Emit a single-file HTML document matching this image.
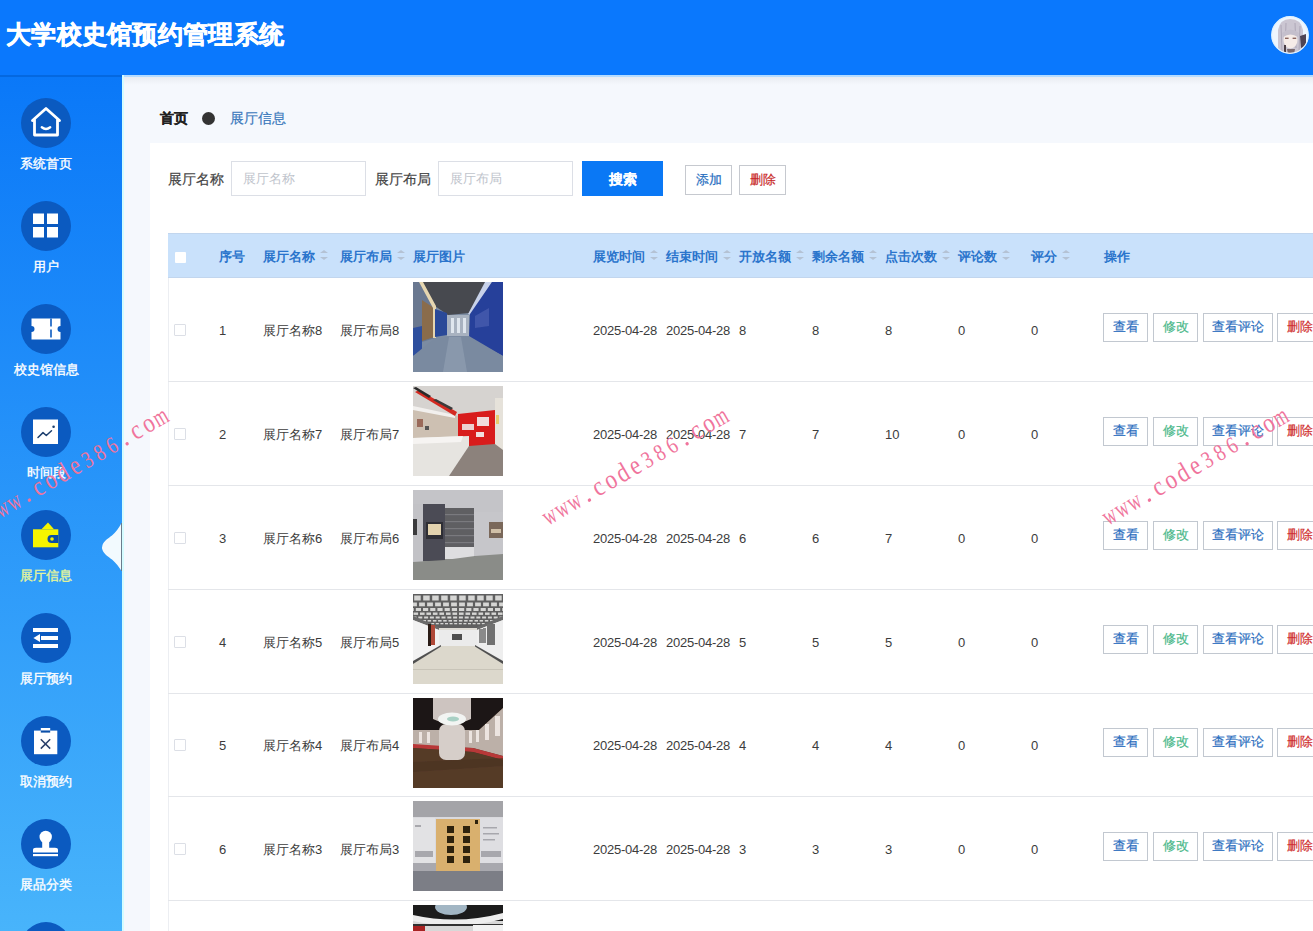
<!DOCTYPE html><html><head><meta charset="utf-8"><style>
*{box-sizing:border-box;margin:0;padding:0}
html,body{width:1313px;height:931px;overflow:hidden;background:#f5f8fd;font-family:"Liberation Sans",sans-serif;position:relative}
.a{position:absolute}
#hdr{left:0;top:0;width:1313px;height:75px;background:#0a78fd}
#title{left:6px;top:19px;color:#fff;font-size:25.3px;letter-spacing:0.3px;line-height:30px;font-weight:bold;white-space:nowrap;-webkit-text-stroke:0.6px #fff}
#side{left:0;top:75px;width:122px;height:856px;background:linear-gradient(#0a78f8,#48b4fb)}
.circ{position:absolute;left:21px;width:50px;height:50px;border-radius:50%;background:#0b5ac0}
.circ svg{position:absolute;left:0;top:0}
.lbl{position:absolute;left:0;width:92px;text-align:center;color:#fff;font-size:13px;line-height:16px;white-space:nowrap;-webkit-text-stroke:0.35px currentColor}
#main{left:122px;top:75px;width:1191px;height:856px;background:#f5f8fd}
#card{left:150px;top:143px;width:1163px;height:788px;background:#fff}
.bc{font-size:14px;line-height:18px;white-space:nowrap}
.slab{font-size:13.6px;color:#444;line-height:16px;white-space:nowrap;-webkit-text-stroke:0.2px currentColor}
.inp{height:35px;border:1px solid #dcdfe6;background:#fff;font-size:13px;color:#c0c4cc;line-height:33px;padding-left:11px;white-space:nowrap}
.btn{border:1px solid #c6c9cf;background:#fff;font-size:13px;text-align:center;white-space:nowrap;-webkit-text-stroke:0.2px currentColor}
#thead{left:168px;top:233px;width:1145px;height:45px;background:#c9e1fb}
.th{font-size:13px;font-weight:bold;color:#2a74cc;line-height:16px;white-space:nowrap;top:249px}
.sort{width:8px;height:10px;top:250px}
.sort:before,.sort:after{content:"";position:absolute;left:0;border-left:4px solid transparent;border-right:4px solid transparent}
.sort:before{top:0;border-bottom:3px solid #b4c2d4}
.sort:after{bottom:0;border-top:3px solid #b4c2d4}
.td{font-size:13px;color:#3c3c3c;line-height:16px;white-space:nowrap}
.dt{letter-spacing:-0.25px}
.rb{left:168px;width:1145px;height:1px;background:#e4e6ea}
.cb{width:12px;height:12px;border:1px solid #dcdfe6;background:#fff;border-radius:1px}
.img{left:413px;width:90px;height:90px;overflow:hidden}
.ob{height:29px;line-height:25px;-webkit-text-stroke:0.2px currentColor;font-size:13px;text-align:center;border:1px solid #c2c8d0;background:#fff;white-space:nowrap}
.wm{font-family:"Liberation Serif",serif;font-size:24px;color:#ee6f98;white-space:nowrap;letter-spacing:2.6px;transform-origin:0 0;transform:rotate(-31deg);line-height:24px}
</style></head><body>
<svg width="0" height="0" style="position:absolute"><defs><filter id="bl" x="0" y="0" width="1" height="1"><feGaussianBlur stdDeviation="0.5"/></filter></defs></svg>
<div id="hdr" class="a"><div id="title" class="a">大学校史馆预约管理系统</div>
<svg class="a" style="left:1271px;top:16px" width="38" height="38" viewBox="0 0 38 38"><defs><clipPath id="avc"><circle cx="19" cy="19" r="18.5"/></clipPath></defs><g clip-path="url(#avc)"><rect width="38" height="38" fill="#eef6fe"/><path d="M7 38 V14 Q9 3 19 3 Q30 3 32 14 V38 Z" fill="#cbc6d2"/><path d="M10 9 L11 36 M15 7 L14 34 M24 7 L25 32 M29 10 L28 36" stroke="#aea8b8" stroke-width="1"/><ellipse cx="19.5" cy="24" rx="7" ry="8.5" fill="#f6ece8"/><path d="M11 17 Q19.5 10 28 17 L27 21 Q19.5 16 12 21 Z" fill="#c4bfcc"/><rect x="14" y="21.6" width="3.6" height="1.4" fill="#8a6660"/><rect x="21.6" y="21.6" width="3.6" height="1.4" fill="#8a6660"/><path d="M29 20 L35 18 L35 30 L30 32 Z" fill="#4e4454"/><path d="M16 33 L17 38 H23 L24 33 Z" fill="#7a6a6e"/><rect x="13" y="29" width="2" height="9" fill="#4a3e46"/></g><circle cx="19" cy="19" r="18.3" fill="none" stroke="#dff2ff" stroke-width="1.2"/></svg>
</div>
<div id="side" class="a">
<div class="circ" style="top:23px"><svg width="50" height="50" viewBox="0 0 50 50"><path d="M11.5 22.5 L25 10.5 L38.5 22.5 M13.5 21 V37 H36.5 V21" fill="none" stroke="#fff" stroke-width="2.8" stroke-linejoin="round" stroke-linecap="round"/><path d="M20.8 29.3 Q25 32.5 29.2 29.3" fill="none" stroke="#fff" stroke-width="2.4" stroke-linecap="round"/></svg></div>
<div class="lbl" style="top:81px;color:#fff">系统首页</div>
<div class="circ" style="top:126px"><svg width="50" height="50" viewBox="0 0 50 50"><rect x="12" y="12.5" width="11" height="10.5" fill="#fff"/><rect x="26" y="12.5" width="11" height="10.5" fill="#fff"/><rect x="12" y="26" width="11" height="10.5" fill="#fff"/><rect x="26" y="26" width="11" height="10.5" fill="#fff"/></svg></div>
<div class="lbl" style="top:184px;color:#fff">用户</div>
<div class="circ" style="top:229px"><svg width="50" height="50" viewBox="0 0 50 50"><path d="M10.5 14.5 H39.5 V22 A3 3 0 0 0 39.5 28 V35.5 H10.5 V28 A3 3 0 0 0 10.5 22 Z" fill="#fff"/><line x1="30" y1="14.5" x2="30" y2="35.5" stroke="#0b5ac0" stroke-width="1.6" stroke-dasharray="8 3"/></svg></div>
<div class="lbl" style="top:287px;color:#fff">校史馆信息</div>
<div class="circ" style="top:332px"><svg width="50" height="50" viewBox="0 0 50 50"><rect x="12" y="12.5" width="25" height="24.5" fill="#fff"/><polyline points="17,30.5 22,25.6 25.3,28.5 30.5,23.7" fill="none" stroke="#1c3f6e" stroke-width="1.5" stroke-linejoin="round" stroke-linecap="round"/><circle cx="32.6" cy="19.8" r="1.3" fill="#1c3f6e"/></svg></div>
<div class="lbl" style="top:390px;color:#fff">时间段</div>
<div class="circ" style="top:435px"><svg width="50" height="50" viewBox="0 0 50 50"><path d="M20.5 19.3 L27 12.6 L33 19.3 Z" fill="#f5f500"/><rect x="12" y="19.3" width="25.3" height="18" fill="#f5f500"/><path d="M37.3 25 H30.5 A4 4 0 0 0 30.5 33 H37.3 Z" fill="#0a4fa8"/><circle cx="31" cy="29" r="1.8" fill="#f5f500"/></svg></div>
<div class="lbl" style="top:493px;color:#e4f59a">展厅信息</div>
<div class="circ" style="top:538px"><svg width="50" height="50" viewBox="0 0 50 50"><rect x="12" y="15" width="25" height="4" fill="#fff"/><rect x="20" y="23" width="17" height="4" fill="#fff"/><path d="M12.4 25 L19 21 V29 Z" fill="#fff"/><rect x="12" y="31" width="25" height="4" fill="#fff"/></svg></div>
<div class="lbl" style="top:596px;color:#fff">展厅预约</div>
<div class="circ" style="top:641px"><svg width="50" height="50" viewBox="0 0 50 50"><rect x="13" y="14.6" width="23.3" height="23.6" fill="#fff"/><rect x="19.8" y="12" width="9.4" height="2.6" fill="#fff"/><rect x="19.8" y="14.6" width="9.4" height="2" fill="#0a4fa8"/><path d="M19.8 23.2 L29.2 32.6 M29.2 23.2 L19.8 32.6" stroke="#2a3f6a" stroke-width="1.5"/></svg></div>
<div class="lbl" style="top:699px;color:#fff">取消预约</div>
<div class="circ" style="top:744px"><svg width="50" height="50" viewBox="0 0 50 50"><circle cx="24.7" cy="18" r="6.2" fill="#fff"/><rect x="21.2" y="20" width="7" height="9.5" fill="#fff"/><path d="M12 33.5 V31 Q12 28.8 15 28.8 H34 Q37 28.8 37 31 V33.5 Z" fill="#fff"/><rect x="12" y="35" width="25" height="2.2" fill="#fff"/></svg></div>
<div class="lbl" style="top:802px;color:#fff">展品分类</div>
<div class="circ" style="top:847px"><svg width="50" height="50" viewBox="0 0 50 50"></svg></div>
</div>
<svg class="a" style="left:100px;top:521px" width="24" height="52" viewBox="0 0 24 52"><path d="M21.5 2 C19 7, 16 11, 12 14.6 C8 17.5, 4 20, 2.5 24 Q1.5 26.6 2.5 29 C4 33, 8 35.5, 12 38.5 C16 42, 19 46, 21.5 50 Z" fill="#f2fafe"/><rect x="21" y="2" width="1" height="48" fill="#6a7c8c"/></svg>
<div id="main" class="a"></div>
<div class="a" style="left:0;top:75px;width:122px;height:2px;background:#0468e0"></div>
<div class="a" style="left:122px;top:77px;width:1191px;height:8px;background:linear-gradient(#e9ecf1,#f5f8fd)"></div>
<div class="a" style="left:122px;top:75px;width:1191px;height:2px;background:#b5dcff"></div>
<div class="a" style="left:122px;top:75px;width:2px;height:856px;background:#d4fcff"></div>
<div class="a bc" style="left:160px;top:109px;font-weight:bold;color:#222;-webkit-text-stroke:0.25px #222">首页</div>
<div class="a" style="left:202px;top:112px;width:13px;height:13px;border-radius:50%;background:#333"></div>
<div class="a bc" style="left:230px;top:109px;color:#3b78bc;-webkit-text-stroke:0.2px #3b78bc">展厅信息</div>
<div id="card" class="a"></div>
<div class="a slab" style="left:168px;top:172px">展厅名称</div>
<div class="a inp" style="left:231px;top:161px;width:135px">展厅名称</div>
<div class="a slab" style="left:375px;top:172px">展厅布局</div>
<div class="a inp" style="left:438px;top:161px;width:135px">展厅布局</div>
<div class="a" style="left:582px;top:161px;width:81px;height:35px;background:#0a78f5;color:#fff;font-size:14px;font-weight:bold;line-height:36px;text-align:center;-webkit-text-stroke:0.15px #fff">搜索</div>
<div class="a btn" style="left:685px;top:165px;width:47px;height:30px;line-height:28px;color:#2a6fbf">添加</div>
<div class="a btn" style="left:739px;top:165px;width:47px;height:30px;line-height:28px;color:#c82828">删除</div>
<div id="thead" class="a"></div>
<div class="a" style="left:168px;top:233px;width:1145px;height:1px;background:#c2d6ee"></div>
<div class="a" style="left:168px;top:277px;width:1145px;height:1px;background:#c2d6ee"></div>
<div class="a" style="left:168px;top:278px;width:1px;height:653px;background:#eceef2"></div>
<div class="a" style="left:175px;top:252px;width:11px;height:11px;background:#fff;border-radius:1px"></div>
<div class="a th" style="left:219px">序号</div>
<div class="a th" style="left:263px">展厅名称</div>
<div class="a sort" style="left:320px"></div>
<div class="a th" style="left:340px">展厅布局</div>
<div class="a sort" style="left:397px"></div>
<div class="a th" style="left:413px">展厅图片</div>
<div class="a th" style="left:593px">展览时间</div>
<div class="a sort" style="left:650px"></div>
<div class="a th" style="left:666px">结束时间</div>
<div class="a sort" style="left:723px"></div>
<div class="a th" style="left:739px">开放名额</div>
<div class="a sort" style="left:796px"></div>
<div class="a th" style="left:812px">剩余名额</div>
<div class="a sort" style="left:869px"></div>
<div class="a th" style="left:885px">点击次数</div>
<div class="a sort" style="left:942px"></div>
<div class="a th" style="left:958px">评论数</div>
<div class="a sort" style="left:1002px"></div>
<div class="a th" style="left:1031px">评分</div>
<div class="a sort" style="left:1062px"></div>
<div class="a th" style="left:1104px">操作</div>
<div class="a rb" style="top:381px"></div>
<div class="a cb" style="left:174px;top:324px"></div>
<div class="a td" style="left:219px;top:323px">1</div>
<div class="a td" style="left:263px;top:323px">展厅名称8</div>
<div class="a td" style="left:340px;top:323px">展厅布局8</div>
<div class="a img" style="top:282px"><svg width="90" height="90" viewBox="0 0 90 90"><g filter="url(#bl)"><rect width="90" height="90" fill="#7c8ca2"/>
<polygon points="8,0 76,0 56,31 35,33 22,24" fill="#46484f"/>
<polygon points="0,0 8,0 22,24 22,56 9,60 0,72" fill="#6a7890"/>
<polygon points="0,46 9,44 9,70 0,74" fill="#2f4f9e"/>
<polygon points="9,18 21,26 21,55 9,59" fill="#8a6c4c"/>
<polygon points="6,0 10,0 23,24 23,56 20,56 20,26" fill="#e6d6b0"/>
<polygon points="22,27 34,31 34,53 22,55" fill="#2a4a98"/>
<rect x="34" y="33" width="22" height="21" fill="#a8b2c0"/>
<rect x="38" y="36" width="3" height="15" fill="#dfe6ee"/><rect x="44" y="36" width="3" height="15" fill="#dfe6ee"/><rect x="50" y="36" width="3" height="15" fill="#dfe6ee"/>
<polygon points="72,0 79,0 58,33 55,32" fill="#c8d2ea"/>
<polygon points="79,0 90,0 90,74 56,56 57,32" fill="#27409a"/>
<polygon points="62,34 76,26 76,44 62,46" fill="#4a60b0" opacity=".7"/>
<polygon points="0,74 22,56 56,54 90,74 90,90 0,90" fill="#7a8aa0"/>
<polygon points="36,55 48,55 54,90 30,90" fill="#92a2b4" opacity=".6"/></g></svg></div>
<div class="a td dt" style="left:593px;top:323px">2025-04-28</div>
<div class="a td dt" style="left:666px;top:323px">2025-04-28</div>
<div class="a td" style="left:739px;top:323px">8</div>
<div class="a td" style="left:812px;top:323px">8</div>
<div class="a td" style="left:885px;top:323px">8</div>
<div class="a td" style="left:958px;top:323px">0</div>
<div class="a td" style="left:1031px;top:323px">0</div>
<div class="a ob" style="left:1103px;top:313px;width:45px;color:#2d6fc0">查看</div>
<div class="a ob" style="left:1153px;top:313px;width:45px;color:#4ab88a">修改</div>
<div class="a ob" style="left:1203px;top:313px;width:70px;color:#2d6fc0">查看评论</div>
<div class="a ob" style="left:1277px;top:313px;width:45px;color:#d03030">删除</div>
<div class="a rb" style="top:485px"></div>
<div class="a cb" style="left:174px;top:428px"></div>
<div class="a td" style="left:219px;top:427px">2</div>
<div class="a td" style="left:263px;top:427px">展厅名称7</div>
<div class="a td" style="left:340px;top:427px">展厅布局7</div>
<div class="a img" style="top:386px"><svg width="90" height="90" viewBox="0 0 90 90"><g filter="url(#bl)"><rect width="90" height="90" fill="#d6d3d0"/>
<polygon points="0,22 46,30 46,52 0,54" fill="#cdc0b2"/>
<polygon points="0,20 42,29 42,32 0,24" fill="#f2f0ee"/>
<polygon points="2,6 6,4 44,26 42,30" fill="#d42a20"/>
<polygon points="0,2 3,1 18,10 16,12" fill="#2a2a2a"/><polygon points="20,14 23,13 40,22 38,24" fill="#3a3a3a"/>
<rect x="4" y="33" width="6" height="8" fill="#9a6a5a"/><rect x="12" y="40" width="4" height="4" fill="#555"/>
<polygon points="45,28 82,24 82,60 56,60 45,52" fill="#d81c1c"/>
<rect x="64" y="31" width="12" height="9" fill="#f0dcdc"/><rect x="49" y="38" width="12" height="6" fill="#ecd0d0"/><rect x="63" y="46" width="8" height="5" fill="#f0e0e0"/>
<rect x="82" y="12" width="8" height="54" fill="#e6e2da"/><rect x="83" y="29" width="3" height="9" fill="#e8cc70"/>
<polygon points="0,52 56,50 56,62 42,90 0,90" fill="#e6e4e0"/>
<polygon points="0,52 50,50 48,56 0,58" fill="#f6f4f2"/>
<polygon points="36,90 56,60 82,58 90,64 90,90" fill="#8c827c"/></g></svg></div>
<div class="a td dt" style="left:593px;top:427px">2025-04-28</div>
<div class="a td dt" style="left:666px;top:427px">2025-04-28</div>
<div class="a td" style="left:739px;top:427px">7</div>
<div class="a td" style="left:812px;top:427px">7</div>
<div class="a td" style="left:885px;top:427px">10</div>
<div class="a td" style="left:958px;top:427px">0</div>
<div class="a td" style="left:1031px;top:427px">0</div>
<div class="a ob" style="left:1103px;top:417px;width:45px;color:#2d6fc0">查看</div>
<div class="a ob" style="left:1153px;top:417px;width:45px;color:#4ab88a">修改</div>
<div class="a ob" style="left:1203px;top:417px;width:70px;color:#2d6fc0">查看评论</div>
<div class="a ob" style="left:1277px;top:417px;width:45px;color:#d03030">删除</div>
<div class="a rb" style="top:589px"></div>
<div class="a cb" style="left:174px;top:532px"></div>
<div class="a td" style="left:219px;top:531px">3</div>
<div class="a td" style="left:263px;top:531px">展厅名称6</div>
<div class="a td" style="left:340px;top:531px">展厅布局6</div>
<div class="a img" style="top:490px"><svg width="90" height="90" viewBox="0 0 90 90"><g filter="url(#bl)"><rect width="90" height="90" fill="#8c8e8a"/>
<rect x="0" y="0" width="90" height="24" fill="#c4c4c8"/>
<rect x="0" y="14" width="10" height="58" fill="#c2c2c6"/><rect x="0" y="29" width="4" height="16" fill="#3a3a3e"/>
<rect x="10" y="14" width="22" height="57" fill="#4c4c54"/>
<rect x="13" y="32" width="17" height="17" fill="#2e2e34"/><rect x="15" y="34" width="13" height="11" fill="#e2d2ae"/>
<rect x="32" y="18" width="29" height="40" fill="#5e5e62"/>
<g fill="#7a7a7e"><rect x="32" y="24" width="29" height="1.2"/><rect x="32" y="31" width="29" height="1.2"/><rect x="32" y="38" width="29" height="1.2"/><rect x="32" y="45" width="29" height="1.2"/><rect x="32" y="52" width="29" height="1.2"/></g>
<rect x="32" y="57" width="29" height="12" fill="#dedee0"/>
<rect x="61" y="22" width="29" height="44" fill="#c6c6ca"/><rect x="76" y="32" width="14" height="16" fill="#7a685a"/><rect x="78" y="39" width="10" height="4" fill="#d0c0a8"/>
<polygon points="0,72 32,70 62,66 90,64 90,90 0,90" fill="#8a8c88"/></g></svg></div>
<div class="a td dt" style="left:593px;top:531px">2025-04-28</div>
<div class="a td dt" style="left:666px;top:531px">2025-04-28</div>
<div class="a td" style="left:739px;top:531px">6</div>
<div class="a td" style="left:812px;top:531px">6</div>
<div class="a td" style="left:885px;top:531px">7</div>
<div class="a td" style="left:958px;top:531px">0</div>
<div class="a td" style="left:1031px;top:531px">0</div>
<div class="a ob" style="left:1103px;top:521px;width:45px;color:#2d6fc0">查看</div>
<div class="a ob" style="left:1153px;top:521px;width:45px;color:#4ab88a">修改</div>
<div class="a ob" style="left:1203px;top:521px;width:70px;color:#2d6fc0">查看评论</div>
<div class="a ob" style="left:1277px;top:521px;width:45px;color:#d03030">删除</div>
<div class="a rb" style="top:693px"></div>
<div class="a cb" style="left:174px;top:636px"></div>
<div class="a td" style="left:219px;top:635px">4</div>
<div class="a td" style="left:263px;top:635px">展厅名称5</div>
<div class="a td" style="left:340px;top:635px">展厅布局5</div>
<div class="a img" style="top:594px"><svg width="90" height="90" viewBox="0 0 90 90"><g filter="url(#bl)"><rect width="90" height="90" fill="#dedbd4"/>
<polygon points="0,0 90,0 90,26 64,34 26,34 0,26" fill="#5e5e5e"/>
<g fill="#d6d6d4"><rect x="1.2" y="1.5" width="6.5" height="5.0"/><rect x="10.2" y="1.5" width="6.5" height="5.0"/><rect x="19.2" y="1.5" width="6.5" height="5.0"/><rect x="28.2" y="1.5" width="6.5" height="5.0"/><rect x="37.2" y="1.5" width="6.5" height="5.0"/><rect x="46.2" y="1.5" width="6.5" height="5.0"/><rect x="55.2" y="1.5" width="6.5" height="5.0"/><rect x="64.2" y="1.5" width="6.5" height="5.0"/><rect x="73.2" y="1.5" width="6.5" height="5.0"/><rect x="82.2" y="1.5" width="6.5" height="5.0"/><rect x="-1.9" y="8.5" width="5.8" height="3.8"/><rect x="6.1" y="8.5" width="5.8" height="3.8"/><rect x="14.1" y="8.5" width="5.8" height="3.8"/><rect x="22.1" y="8.5" width="5.8" height="3.8"/><rect x="30.1" y="8.5" width="5.8" height="3.8"/><rect x="38.1" y="8.5" width="5.8" height="3.8"/><rect x="46.1" y="8.5" width="5.8" height="3.8"/><rect x="54.1" y="8.5" width="5.8" height="3.8"/><rect x="62.1" y="8.5" width="5.8" height="3.8"/><rect x="70.1" y="8.5" width="5.8" height="3.8"/><rect x="78.1" y="8.5" width="5.8" height="3.8"/><rect x="86.1" y="8.5" width="5.8" height="3.8"/><rect x="-4.4" y="14" width="5.2" height="3.0"/><rect x="2.8" y="14" width="5.2" height="3.0"/><rect x="10.0" y="14" width="5.2" height="3.0"/><rect x="17.2" y="14" width="5.2" height="3.0"/><rect x="24.4" y="14" width="5.2" height="3.0"/><rect x="31.6" y="14" width="5.2" height="3.0"/><rect x="38.8" y="14" width="5.2" height="3.0"/><rect x="46.0" y="14" width="5.2" height="3.0"/><rect x="53.2" y="14" width="5.2" height="3.0"/><rect x="60.4" y="14" width="5.2" height="3.0"/><rect x="67.6" y="14" width="5.2" height="3.0"/><rect x="74.8" y="14" width="5.2" height="3.0"/><rect x="82.0" y="14" width="5.2" height="3.0"/><rect x="89.2" y="14" width="5.2" height="3.0"/><rect x="0.5" y="18.5" width="4.6" height="2.4"/><rect x="7.0" y="18.5" width="4.6" height="2.4"/><rect x="13.4" y="18.5" width="4.6" height="2.4"/><rect x="19.9" y="18.5" width="4.6" height="2.4"/><rect x="26.4" y="18.5" width="4.6" height="2.4"/><rect x="33.0" y="18.5" width="4.6" height="2.4"/><rect x="39.5" y="18.5" width="4.6" height="2.4"/><rect x="46.0" y="18.5" width="4.6" height="2.4"/><rect x="52.5" y="18.5" width="4.6" height="2.4"/><rect x="59.0" y="18.5" width="4.6" height="2.4"/><rect x="65.5" y="18.5" width="4.6" height="2.4"/><rect x="72.0" y="18.5" width="4.6" height="2.4"/><rect x="78.5" y="18.5" width="4.6" height="2.4"/><rect x="85.0" y="18.5" width="4.6" height="2.4"/><rect x="-0.5" y="22.5" width="4.0" height="2.0"/><rect x="5.3" y="22.5" width="4.0" height="2.0"/><rect x="11.1" y="22.5" width="4.0" height="2.0"/><rect x="16.9" y="22.5" width="4.0" height="2.0"/><rect x="22.7" y="22.5" width="4.0" height="2.0"/><rect x="28.5" y="22.5" width="4.0" height="2.0"/><rect x="34.3" y="22.5" width="4.0" height="2.0"/><rect x="40.1" y="22.5" width="4.0" height="2.0"/><rect x="45.9" y="22.5" width="4.0" height="2.0"/><rect x="51.7" y="22.5" width="4.0" height="2.0"/><rect x="57.5" y="22.5" width="4.0" height="2.0"/><rect x="63.3" y="22.5" width="4.0" height="2.0"/><rect x="69.1" y="22.5" width="4.0" height="2.0"/><rect x="74.9" y="22.5" width="4.0" height="2.0"/><rect x="80.7" y="22.5" width="4.0" height="2.0"/><rect x="86.5" y="22.5" width="4.0" height="2.0"/><rect x="-1.0" y="26" width="3.5" height="1.6"/><rect x="4.2" y="26" width="3.5" height="1.6"/><rect x="9.5" y="26" width="3.5" height="1.6"/><rect x="14.6" y="26" width="3.5" height="1.6"/><rect x="19.9" y="26" width="3.5" height="1.6"/><rect x="25.1" y="26" width="3.5" height="1.6"/><rect x="30.2" y="26" width="3.5" height="1.6"/><rect x="35.5" y="26" width="3.5" height="1.6"/><rect x="40.6" y="26" width="3.5" height="1.6"/><rect x="45.9" y="26" width="3.5" height="1.6"/><rect x="51.1" y="26" width="3.5" height="1.6"/><rect x="56.2" y="26" width="3.5" height="1.6"/><rect x="61.5" y="26" width="3.5" height="1.6"/><rect x="66.6" y="26" width="3.5" height="1.6"/><rect x="71.8" y="26" width="3.5" height="1.6"/><rect x="77.0" y="26" width="3.5" height="1.6"/><rect x="82.2" y="26" width="3.5" height="1.6"/><rect x="87.4" y="26" width="3.5" height="1.6"/><rect x="-0.2" y="29" width="3.0" height="1.3"/><rect x="4.4" y="29" width="3.0" height="1.3"/><rect x="9.0" y="29" width="3.0" height="1.3"/><rect x="13.6" y="29" width="3.0" height="1.3"/><rect x="18.2" y="29" width="3.0" height="1.3"/><rect x="22.8" y="29" width="3.0" height="1.3"/><rect x="27.4" y="29" width="3.0" height="1.3"/><rect x="32.0" y="29" width="3.0" height="1.3"/><rect x="36.6" y="29" width="3.0" height="1.3"/><rect x="41.2" y="29" width="3.0" height="1.3"/><rect x="45.8" y="29" width="3.0" height="1.3"/><rect x="50.4" y="29" width="3.0" height="1.3"/><rect x="55.0" y="29" width="3.0" height="1.3"/><rect x="59.6" y="29" width="3.0" height="1.3"/><rect x="64.2" y="29" width="3.0" height="1.3"/><rect x="68.8" y="29" width="3.0" height="1.3"/><rect x="73.4" y="29" width="3.0" height="1.3"/><rect x="78.0" y="29" width="3.0" height="1.3"/><rect x="82.6" y="29" width="3.0" height="1.3"/><rect x="87.2" y="29" width="3.0" height="1.3"/></g>
<polygon points="0,26 26,36 26,33 0,22" fill="#6a6a6a"/><polygon points="90,26 64,36 64,33 90,22" fill="#6a6a6a"/>
<polygon points="0,26 26,36 28,52 0,68" fill="#f2f2f2"/>
<polygon points="90,26 64,36 62,52 90,68" fill="#eeeeee"/>
<rect x="26" y="36" width="38" height="16" fill="#ebebeb"/><rect x="39" y="40" width="10" height="6" fill="#4e4e4e"/>
<rect x="15" y="30" width="3" height="22" fill="#2a1a18"/><rect x="18" y="31" width="4" height="20" fill="#b04a38"/>
<rect x="74" y="30" width="8" height="21" fill="#707070"/><rect x="66" y="35" width="4" height="14" fill="#8a8a8a"/><rect x="70" y="34" width="3" height="15" fill="#8a8a8a"/>
<polygon points="0,68 28,52 62,52 90,68 90,90 0,90" fill="#dcd8cc"/>
<polygon points="0,67 28,51 28,52.5 0,70" fill="#505050"/><polygon points="90,67 62,51 62,52.5 90,70" fill="#505050"/>
<rect x="0" y="75" width="90" height="1" fill="#c8c4b8"/></g></svg></div>
<div class="a td dt" style="left:593px;top:635px">2025-04-28</div>
<div class="a td dt" style="left:666px;top:635px">2025-04-28</div>
<div class="a td" style="left:739px;top:635px">5</div>
<div class="a td" style="left:812px;top:635px">5</div>
<div class="a td" style="left:885px;top:635px">5</div>
<div class="a td" style="left:958px;top:635px">0</div>
<div class="a td" style="left:1031px;top:635px">0</div>
<div class="a ob" style="left:1103px;top:625px;width:45px;color:#2d6fc0">查看</div>
<div class="a ob" style="left:1153px;top:625px;width:45px;color:#4ab88a">修改</div>
<div class="a ob" style="left:1203px;top:625px;width:70px;color:#2d6fc0">查看评论</div>
<div class="a ob" style="left:1277px;top:625px;width:45px;color:#d03030">删除</div>
<div class="a rb" style="top:796px"></div>
<div class="a cb" style="left:174px;top:739px"></div>
<div class="a td" style="left:219px;top:738px">5</div>
<div class="a td" style="left:263px;top:738px">展厅名称4</div>
<div class="a td" style="left:340px;top:738px">展厅布局4</div>
<div class="a img" style="top:698px"><svg width="90" height="90" viewBox="0 0 90 90"><g filter="url(#bl)"><rect width="90" height="90" fill="#553a28"/>
<polygon points="0,0 90,0 90,10 66,32 0,32" fill="#1e1614"/>
<polygon points="0,32 66,32 90,10 90,58 60,50 0,48" fill="#bcb0a8"/>
<g fill="#ece4e0"><rect x="6" y="34" width="3" height="11"/><rect x="14" y="34" width="3" height="11"/><rect x="56" y="33" width="3" height="12"/><rect x="63" y="32" width="3" height="12"/><rect x="72" y="26" width="4" height="16"/><rect x="82" y="18" width="5" height="20"/></g>
<polygon points="0,46 60,50 90,58 90,62 60,54 0,50" fill="#b83838"/>
<polygon points="0,50 60,54 90,62 90,90 0,90" fill="#553a28"/>
<polygon points="0,64 90,60 90,68 0,74" fill="#4a3222" opacity=".6"/>
<rect x="26" y="26" width="26" height="36" rx="7" fill="#d6cec9"/>
<path d="M20 0 H58 V21 Q39 30 20 21 Z" fill="#cdc4c0"/>
<ellipse cx="39" cy="21" rx="14" ry="6.5" fill="#f2f4f2"/><ellipse cx="40" cy="21" rx="6" ry="2.6" fill="#a8d0c4"/></g></svg></div>
<div class="a td dt" style="left:593px;top:738px">2025-04-28</div>
<div class="a td dt" style="left:666px;top:738px">2025-04-28</div>
<div class="a td" style="left:739px;top:738px">4</div>
<div class="a td" style="left:812px;top:738px">4</div>
<div class="a td" style="left:885px;top:738px">4</div>
<div class="a td" style="left:958px;top:738px">0</div>
<div class="a td" style="left:1031px;top:738px">0</div>
<div class="a ob" style="left:1103px;top:728px;width:45px;color:#2d6fc0">查看</div>
<div class="a ob" style="left:1153px;top:728px;width:45px;color:#4ab88a">修改</div>
<div class="a ob" style="left:1203px;top:728px;width:70px;color:#2d6fc0">查看评论</div>
<div class="a ob" style="left:1277px;top:728px;width:45px;color:#d03030">删除</div>
<div class="a rb" style="top:900px"></div>
<div class="a cb" style="left:174px;top:843px"></div>
<div class="a td" style="left:219px;top:842px">6</div>
<div class="a td" style="left:263px;top:842px">展厅名称3</div>
<div class="a td" style="left:340px;top:842px">展厅布局3</div>
<div class="a img" style="top:801px"><svg width="90" height="90" viewBox="0 0 90 90"><g filter="url(#bl)"><rect width="90" height="90" fill="#b4b4b8"/>
<rect x="0" y="0" width="90" height="16" fill="#a4a4a8"/>
<rect x="0" y="16" width="90" height="54" fill="#dadade"/>
<rect x="0" y="17" width="22" height="50" fill="#e2e2e4"/><rect x="66" y="17" width="24" height="50" fill="#dedee2"/>
<g fill="#9a9aa0" opacity=".8"><rect x="2" y="24" width="6" height="2"/><rect x="70" y="26" width="14" height="1.5"/><rect x="70" y="32" width="16" height="1.5"/><rect x="70" y="38" width="12" height="1.5"/><rect x="2" y="50" width="18" height="6"/><rect x="68" y="50" width="20" height="6"/></g>
<rect x="0" y="62" width="90" height="8" fill="#a8a8ae"/>
<rect x="23" y="18" width="44" height="52" fill="#d9b06e"/>
<g fill="#2e2010"><rect x="34" y="25" width="7" height="7"/><rect x="34" y="35" width="7" height="7"/><rect x="34" y="45" width="7" height="7"/><rect x="34" y="55" width="7" height="7"/><rect x="50" y="25" width="7" height="7"/><rect x="50" y="35" width="7" height="7"/><rect x="50" y="45" width="7" height="7"/><rect x="50" y="55" width="7" height="7"/><rect x="62" y="19" width="3" height="4"/></g>
<rect x="0" y="70" width="90" height="20" fill="#7c7e86"/></g></svg></div>
<div class="a td dt" style="left:593px;top:842px">2025-04-28</div>
<div class="a td dt" style="left:666px;top:842px">2025-04-28</div>
<div class="a td" style="left:739px;top:842px">3</div>
<div class="a td" style="left:812px;top:842px">3</div>
<div class="a td" style="left:885px;top:842px">3</div>
<div class="a td" style="left:958px;top:842px">0</div>
<div class="a td" style="left:1031px;top:842px">0</div>
<div class="a ob" style="left:1103px;top:832px;width:45px;color:#2d6fc0">查看</div>
<div class="a ob" style="left:1153px;top:832px;width:45px;color:#4ab88a">修改</div>
<div class="a ob" style="left:1203px;top:832px;width:70px;color:#2d6fc0">查看评论</div>
<div class="a ob" style="left:1277px;top:832px;width:45px;color:#d03030">删除</div>
<div class="a rb" style="top:1004px"></div>
<div class="a cb" style="left:174px;top:947px"></div>
<div class="a td" style="left:219px;top:946px">7</div>
<div class="a td" style="left:263px;top:946px">展厅名称2</div>
<div class="a td" style="left:340px;top:946px">展厅布局2</div>
<div class="a img" style="top:905px"><svg width="90" height="90" viewBox="0 0 90 90"><g filter="url(#bl)"><rect width="90" height="90" fill="#d8d8d8"/>
<rect x="0" y="0" width="90" height="16" fill="#1a1a1a"/>
<ellipse cx="38" cy="2" rx="16" ry="8" fill="#a2b6c4"/>
<path d="M0 10 Q45 20 90 8 V14 Q45 26 0 16 Z" fill="#eeeeee"/>
<rect x="0" y="19" width="90" height="2" fill="#333"/>
<rect x="0" y="21" width="12" height="9" fill="#a82020"/><rect x="60" y="20" width="30" height="10" fill="#f2f2f2"/></g></svg></div>
<div class="a td dt" style="left:593px;top:946px">2025-04-28</div>
<div class="a td dt" style="left:666px;top:946px">2025-04-28</div>
<div class="a td" style="left:739px;top:946px">2</div>
<div class="a td" style="left:812px;top:946px">2</div>
<div class="a td" style="left:885px;top:946px">2</div>
<div class="a td" style="left:958px;top:946px">0</div>
<div class="a td" style="left:1031px;top:946px">0</div>
<div class="a ob" style="left:1103px;top:936px;width:45px;color:#2d6fc0">查看</div>
<div class="a ob" style="left:1153px;top:936px;width:45px;color:#4ab88a">修改</div>
<div class="a ob" style="left:1203px;top:936px;width:70px;color:#2d6fc0">查看评论</div>
<div class="a ob" style="left:1277px;top:936px;width:45px;color:#d03030">删除</div>
<svg class="a" style="left:0;top:0" width="1313" height="931"><g font-family="Liberation Serif" fill="#f0749c" text-anchor="middle">
<g transform="translate(-12.5,526.2) rotate(-30)">
<text font-size="24" transform="translate(7.05,0) scale(0.74,1.1)">w</text>
<text font-size="24" transform="translate(21.15,0) scale(0.74,1.1)">w</text>
<text font-size="24" transform="translate(35.25,0) scale(0.74,1.1)">w</text>
<circle cx="49.35" cy="-1.6" r="1.7"/>
<text font-size="25" transform="translate(63.45,0) scale(0.9,1.1)">c</text>
<text font-size="25" transform="translate(77.55,0) scale(0.9,1.1)">o</text>
<text font-size="25" transform="translate(91.65,0) scale(0.9,1.1)">d</text>
<text font-size="25" transform="translate(105.75,0) scale(0.9,1.1)">e</text>
<text font-size="21" transform="translate(119.85,0) scale(0.92,1.12)">3</text>
<text font-size="21" transform="translate(133.95,0) scale(0.92,1.12)">8</text>
<text font-size="21" transform="translate(148.05,0) scale(0.92,1.12)">6</text>
<circle cx="162.15" cy="-1.6" r="1.7"/>
<text font-size="25" transform="translate(176.25,0) scale(0.9,1.1)">c</text>
<text font-size="25" transform="translate(190.35,0) scale(0.9,1.1)">o</text>
<text font-size="24" transform="translate(204.45,0) scale(0.74,1.1)">m</text>
</g>
<g transform="translate(547.5,526.2) rotate(-30)">
<text font-size="24" transform="translate(7.05,0) scale(0.74,1.1)">w</text>
<text font-size="24" transform="translate(21.15,0) scale(0.74,1.1)">w</text>
<text font-size="24" transform="translate(35.25,0) scale(0.74,1.1)">w</text>
<circle cx="49.35" cy="-1.6" r="1.7"/>
<text font-size="25" transform="translate(63.45,0) scale(0.9,1.1)">c</text>
<text font-size="25" transform="translate(77.55,0) scale(0.9,1.1)">o</text>
<text font-size="25" transform="translate(91.65,0) scale(0.9,1.1)">d</text>
<text font-size="25" transform="translate(105.75,0) scale(0.9,1.1)">e</text>
<text font-size="21" transform="translate(119.85,0) scale(0.92,1.12)">3</text>
<text font-size="21" transform="translate(133.95,0) scale(0.92,1.12)">8</text>
<text font-size="21" transform="translate(148.05,0) scale(0.92,1.12)">6</text>
<circle cx="162.15" cy="-1.6" r="1.7"/>
<text font-size="25" transform="translate(176.25,0) scale(0.9,1.1)">c</text>
<text font-size="25" transform="translate(190.35,0) scale(0.9,1.1)">o</text>
<text font-size="24" transform="translate(204.45,0) scale(0.74,1.1)">m</text>
</g>
<g transform="translate(1107.5,526.2) rotate(-30)">
<text font-size="24" transform="translate(7.05,0) scale(0.74,1.1)">w</text>
<text font-size="24" transform="translate(21.15,0) scale(0.74,1.1)">w</text>
<text font-size="24" transform="translate(35.25,0) scale(0.74,1.1)">w</text>
<circle cx="49.35" cy="-1.6" r="1.7"/>
<text font-size="25" transform="translate(63.45,0) scale(0.9,1.1)">c</text>
<text font-size="25" transform="translate(77.55,0) scale(0.9,1.1)">o</text>
<text font-size="25" transform="translate(91.65,0) scale(0.9,1.1)">d</text>
<text font-size="25" transform="translate(105.75,0) scale(0.9,1.1)">e</text>
<text font-size="21" transform="translate(119.85,0) scale(0.92,1.12)">3</text>
<text font-size="21" transform="translate(133.95,0) scale(0.92,1.12)">8</text>
<text font-size="21" transform="translate(148.05,0) scale(0.92,1.12)">6</text>
<circle cx="162.15" cy="-1.6" r="1.7"/>
<text font-size="25" transform="translate(176.25,0) scale(0.9,1.1)">c</text>
<text font-size="25" transform="translate(190.35,0) scale(0.9,1.1)">o</text>
<text font-size="24" transform="translate(204.45,0) scale(0.74,1.1)">m</text>
</g>
</g></svg>
</body></html>
